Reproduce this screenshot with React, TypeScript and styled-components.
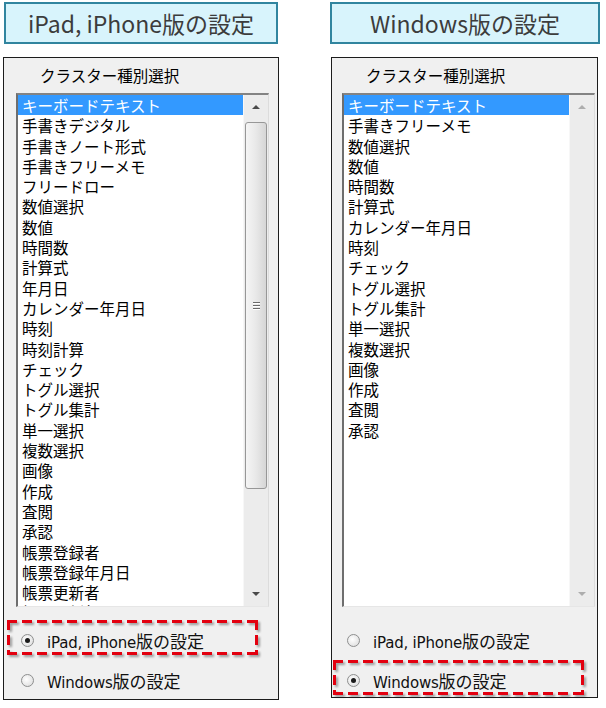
import React from "react";
import styled, { createGlobalStyle } from "styled-components";

const GlobalStyle = createGlobalStyle`
  body {
    margin: 0;
    background: #ffffff;
  }
`;

const ipadItems = [
  "キーボードテキスト",
  "手書きデジタル",
  "手書きノート形式",
  "手書きフリーメモ",
  "フリードロー",
  "数値選択",
  "数値",
  "時間数",
  "計算式",
  "年月日",
  "カレンダー年月日",
  "時刻",
  "時刻計算",
  "チェック",
  "トグル選択",
  "トグル集計",
  "単一選択",
  "複数選択",
  "画像",
  "作成",
  "査閲",
  "承認",
  "帳票登録者",
  "帳票登録年月日",
  "帳票更新者",
  "帳票更新年月日",
];

const windowsItems = [
  "キーボードテキスト",
  "手書きフリーメモ",
  "数値選択",
  "数値",
  "時間数",
  "計算式",
  "カレンダー年月日",
  "時刻",
  "チェック",
  "トグル選択",
  "トグル集計",
  "単一選択",
  "複数選択",
  "画像",
  "作成",
  "査閲",
  "承認",
];

interface PanelProps {
  title: string;
  items: string[];
  mode: "ipad" | "windows";
  width: number;
  titleInset: number;
  titleWidth: number;
  dialogInset: number;
  dialogWidth: number;
  dialogHeight: number;
  padLeft: number;
  scrollable: boolean;
}

function Panel(props: PanelProps) {
  return <Column $width={props.width}>
    <TitleBox $inset={props.titleInset} $width={props.titleWidth}>{props.title}</TitleBox>
    <Dialog $inset={props.dialogInset} $width={props.dialogWidth} $height={props.dialogHeight} $padLeft={props.padLeft}>
      <GroupLabel>クラスター種別選択</GroupLabel>
      <ListBox>
        <Items>
          {props.items.map((item, i) => <Item key={item} $selected={i === 0}>{item}</Item>)}
        </Items>
        <ScrollBar>
          <ArrowButton>
            <ArrowUp $disabled={!props.scrollable}/>
          </ArrowButton>
          <Track>
            {props.scrollable && <Thumb>
              <Grip><span/><span/><span/></Grip>
            </Thumb>}
          </Track>
          <ArrowButton>
            <ArrowDown $disabled={!props.scrollable}/>
          </ArrowButton>
        </ScrollBar>
      </ListBox>
      <RadioGroup>
        <RadioRow $marked={props.mode === "ipad"}>
          <Radio $checked={props.mode === "ipad"}/>
          <RadioText>iPad, iPhone<Jp>版の設定</Jp></RadioText>
        </RadioRow>
        <RadioRow $marked={props.mode === "windows"}>
          <Radio $checked={props.mode === "windows"}/>
          <RadioText>Windows<Jp>版の設定</Jp></RadioText>
        </RadioRow>
      </RadioGroup>
    </Dialog>
  </Column>
}

export default function App() {
  return <>
    <GlobalStyle/>
    <Page>
      <Panel title="iPad, iPhone版の設定" items={ipadItems} mode="ipad" scrollable
             width={276} titleInset={1} titleWidth={274}
             dialogInset={0} dialogWidth={276} dialogHeight={643} padLeft={12}/>
      <Panel title="Windows版の設定" items={windowsItems} mode="windows" scrollable={false}
             width={270} titleInset={0} titleWidth={270}
             dialogInset={1} dialogWidth={267} dialogHeight={641} padLeft={10}/>
    </Page>
  </>
}

const dashH = "repeating-linear-gradient(90deg, #e3000f 0 10px, transparent 10px 15px)";
const dashV = "repeating-linear-gradient(180deg, #e3000f 0 10px, transparent 10px 15px)";

const Page = styled.div`
    display: flex;
    align-items: flex-start;
    gap: 51px;
    padding: 2px 0 0 3px;
    font-family: "Noto Sans CJK JP", sans-serif;
`

const Column = styled.div<{$width: number}>`
    width: ${props => props.$width}px;
    display: flex;
    flex-direction: column;
    gap: 13px;
`

const TitleBox = styled.div<{$inset: number, $width: number}>`
    margin-left: ${props => props.$inset}px;
    width: ${props => props.$width}px;
    height: 42px;
    box-sizing: border-box;
    border: 2px solid #31859f;
    background: #d8f4fc;
    display: flex;
    align-items: center;
    justify-content: center;
    font-family: "Noto Sans CJK JP", sans-serif;
    font-size: 23px;
    color: #3c3c3c;
    padding-bottom: 1px;
`

const Dialog = styled.div<{$inset: number, $width: number, $height: number, $padLeft: number}>`
    margin-left: ${props => props.$inset}px;
    width: ${props => props.$width}px;
    height: ${props => props.$height}px;
    box-sizing: border-box;
    border: 1px solid #1c1c1c;
    background: #f0f0f0;
    padding: 7px 0 0 ${props => props.$padLeft}px;
    display: flex;
    flex-direction: column;
`

const GroupLabel = styled.div`
    margin-left: 24px;
    height: 20px;
    line-height: 20px;
    font-size: 15.5px;
    color: #000;
    margin-bottom: 8px;
`

const ListBox = styled.div`
    width: 253px;
    height: 514px;
    box-sizing: border-box;
    display: flex;
    border-top: 2px solid #838383;
    border-left: 2px solid #6e6e6e;
    border-right: 1px solid #dcdcdc;
    border-bottom: 1px solid #e6e6e6;
    background: #fff;
`

const Items = styled.div`
    flex: 1;
    overflow: hidden;
    background: #fff;
`

const Item = styled.div<{$selected: boolean}>`
    height: 20.3px;
    line-height: 20.3px;
    padding-left: 4px;
    font-size: 15.5px;
    white-space: nowrap;
    color: ${props => props.$selected ? "#ffffff" : "#000000"};
    background: ${props => props.$selected ? "#3399ff" : "transparent"};
`

const ScrollBar = styled.div`
    width: 25px;
    display: flex;
    flex-direction: column;
    background: #ececec;
    border-left: 1px solid #f7f7f7;
    box-sizing: border-box;
`

const ArrowButton = styled.div`
    height: 24px;
    display: flex;
    align-items: center;
    justify-content: center;
`

const ArrowUp = styled.div<{$disabled: boolean}>`
    width: 0;
    height: 0;
    border-left: 4px solid transparent;
    border-right: 4px solid transparent;
    border-bottom: 4px solid ${props => props.$disabled ? "#adadad" : "#4a4a4a"};
`

const ArrowDown = styled.div<{$disabled: boolean}>`
    width: 0;
    height: 0;
    border-left: 4px solid transparent;
    border-right: 4px solid transparent;
    border-top: 4px solid ${props => props.$disabled ? "#adadad" : "#4a4a4a"};
`

const Track = styled.div`
    flex: 1;
    display: flex;
    flex-direction: column;
`

const Thumb = styled.div`
    margin: 3px 1px 0 1px;
    height: 367px;
    box-sizing: border-box;
    border: 1px solid #979797;
    border-radius: 3px;
    background: linear-gradient(to right, #f5f5f5, #e8e8e8 50%, #d6d6d6);
    display: flex;
    align-items: center;
    justify-content: center;
`

const Grip = styled.div`
    display: flex;
    flex-direction: column;
    gap: 2px;

    span {
        display: block;
        width: 7px;
        height: 1px;
        background: #6a6a6a;
        box-shadow: 0 1px 0 #ffffff;
    }
`

const RadioGroup = styled.div`
    margin-top: 21px;
    display: flex;
    flex-direction: column;
    gap: 16px;
`

const RadioRow = styled.div<{$marked: boolean}>`
    position: relative;
    height: 24px;
    display: flex;
    align-items: center;
    padding-left: 5px;

    &::before {
        content: "";
        display: ${props => props.$marked ? "block" : "none"};
        position: absolute;
        left: -9px;
        top: -8px;
        width: 251px;
        height: 35px;
        background:
            ${dashH} top left / 100% 3px no-repeat,
            ${dashH} bottom left / 100% 3px no-repeat,
            ${dashV} top left / 3px 100% no-repeat,
            ${dashV} top right / 3px 100% no-repeat;
        filter: drop-shadow(2px 2px 1px rgba(0, 0, 0, 0.35));
    }
`

const Radio = styled.span<{$checked: boolean}>`
    position: relative;
    width: 13px;
    height: 13px;
    box-sizing: border-box;
    border-radius: 50%;
    border: 1px solid #8e8f8f;
    background: radial-gradient(circle at 40% 40%, #ffffff, #e4e4e4 70%, #d0d0d0);
    flex-shrink: 0;

    &::after {
        content: "";
        display: ${props => props.$checked ? "block" : "none"};
        position: absolute;
        left: 3px;
        top: 3px;
        width: 5px;
        height: 5px;
        border-radius: 50%;
        background: #1a1a1a;
    }
`

const RadioText = styled.span`
    margin-left: 13px;
    font-family: "DejaVu Sans", "Noto Sans CJK JP", sans-serif;
    font-size: 15px;
    color: #111;
    white-space: nowrap;
    letter-spacing: -0.2px;
`

const Jp = styled.span`
    font-family: "Noto Sans CJK JP", sans-serif;
    font-size: 17px;
    letter-spacing: 0;
`
